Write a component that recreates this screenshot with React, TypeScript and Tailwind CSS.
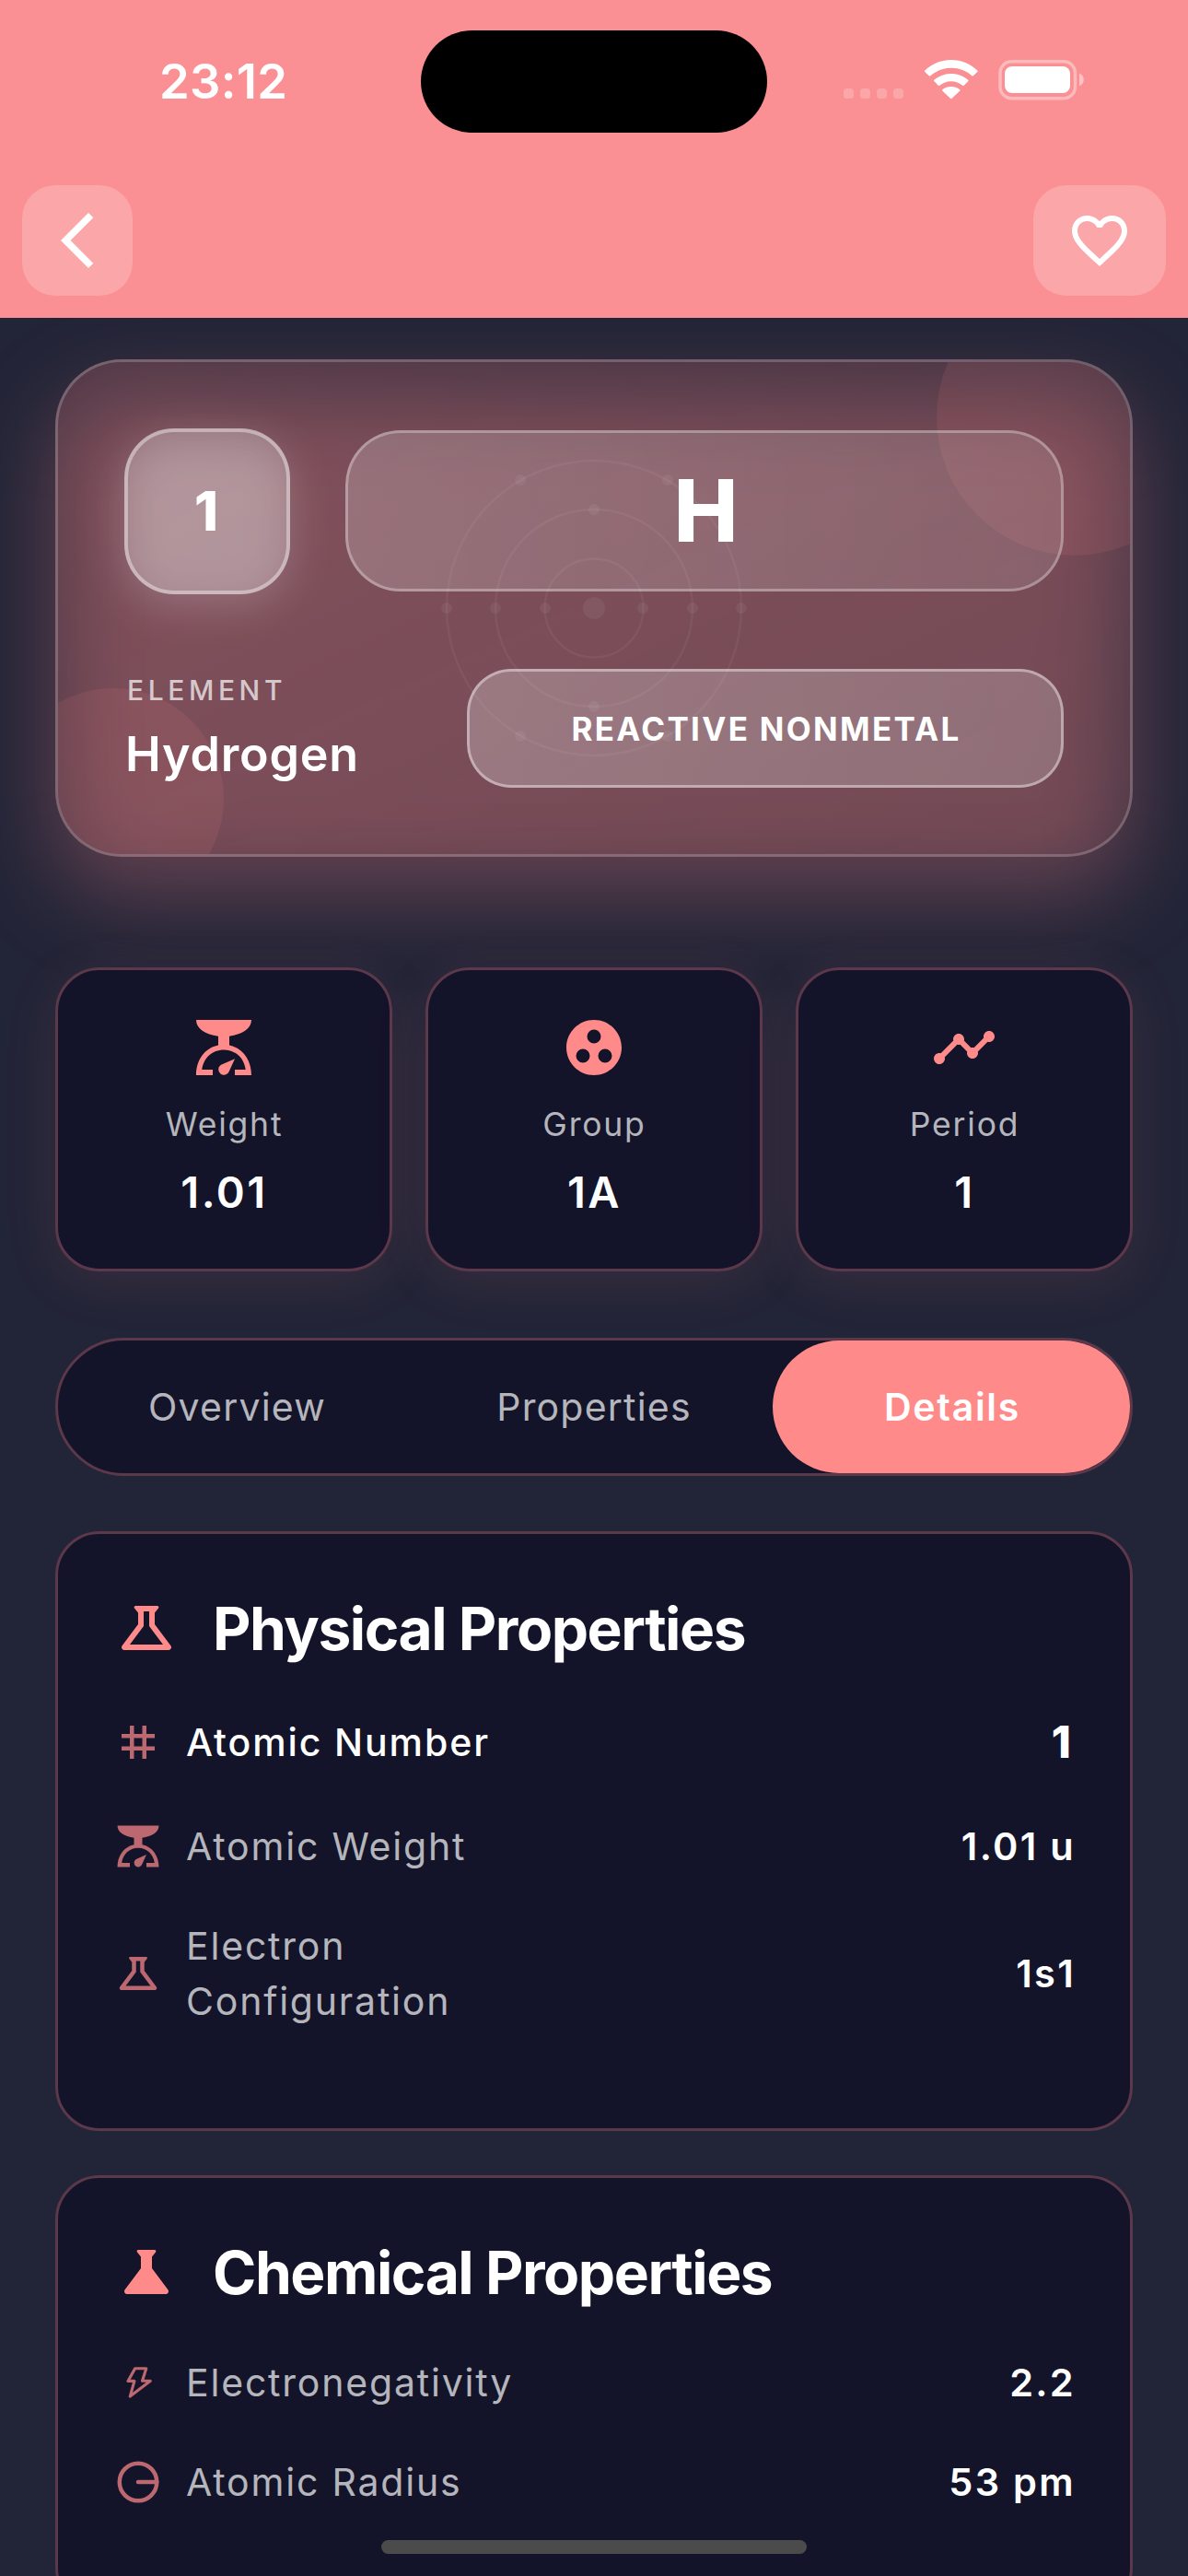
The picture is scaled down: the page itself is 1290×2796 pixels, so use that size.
import type { ReactNode } from "react";
import {
  MdArrowBackIosNew,
  MdFavoriteBorder,
  MdGroupWork,
  MdOutlineScience,
  MdScience,
  MdTag,
  MdTimeline,
} from "react-icons/md";

function ScaleIcon({ className }: { className?: string }) {
  return (
    <svg viewBox="0 0 24 24" fill="currentColor" className={className}>
      <path d="M2 2h20c0 3.2-3.3 5.2-8 5.9v3.3c4.8.9 8 5.3 8 10.8h-6v-2h3.900c-.5-4.200-3.700-7.200-7.900-7.200S4.600 15.800 4.100 20H8v2H2c0-5.500 3.200-9.900 8-10.800V7.900C5.300 7.200 2 5.200 2 2z" />
      <path d="M16 16.050 13.950 20.600A2 2 0 1 1 11 18.250z" />
    </svg>
  );
}

function BoltIcon({ className }: { className?: string }) {
  return (
    <svg viewBox="0 0 24 24" fill="none" stroke="currentColor" strokeWidth="1.400" strokeLinejoin="round" className={className}>
      <path d="M10.500 5.200h5.400l-1.900 6h3.900L8.100 18.700l2.100-7.400H7.100z" />
    </svg>
  );
}

function RadiusIcon({ className }: { className?: string }) {
  return (
    <svg viewBox="0 0 24 24" fill="none" stroke="currentColor" strokeWidth="2" strokeLinecap="round" className={className}>
      <circle cx="12" cy="12" r="9" />
      <path d="M12 12h9" />
    </svg>
  );
}

function StatusIcons() {
  return (
    <svg viewBox="0 0 264 48" className="h-[48px] w-[264px]" fill="#fff">
      {[0, 18, 36, 54].map((x) => (
        <rect key={x} x={1 + x} y="34" width="11" height="11" rx="3.500" opacity=".2" />
      ))}
      <g transform="translate(85.900 3) scale(1.1 1.020)">
        <path d="M29 8.700c7.900 0 15.100 3.100 20.400 8.200.4.400 1.100.4 1.500 0l4-4.100c.4-.4.4-1.100 0-1.600C48.200 4.300 39.100 0 29 0S9.800 4.300 3.100 11.200c-.4.500-.4 1.200 0 1.600l4 4.100c.4.400 1.100.4 1.500 0C13.900 11.800 21.100 8.700 29 8.700z" />
        <path d="M29 22.700c4.300 0 8.300 1.700 11.200 4.400.5.400 1.100.4 1.500 0l4-4.200c.5-.4.500-1.200 0-1.600-4.400-4.200-10.300-6.700-16.700-6.700s-12.300 2.500-16.700 6.700c-.5.400-.5 1.200 0 1.600l4 4.200c.4.400 1 .4 1.500 0 2.900-2.700 6.900-4.400 11.200-4.400z" />
        <path d="M37.500 31.500c.5.400.5 1.100 0 1.600l-7.700 7.900c-.4.500-1.200.5-1.600 0l-7.700-7.900c-.5-.5-.5-1.200 0-1.600 2.300-2 5.300-3.100 8.500-3.100s6.200 1.100 8.500 3.100z" />
      </g>
      <rect x="171" y="4.750" width="81.500" height="40" rx="12.500" fill="none" stroke="#fff" strokeWidth="3.500" opacity=".38" />
      <rect x="176" y="10" width="71" height="29" rx="8" />
      <path d="M257 17.500v14c3-1.200 4.800-4 4.800-7s-1.800-5.800-4.800-7z" opacity=".45" />
    </svg>
  );
}

function OrbitArt() {
  const dots = [
    [-53, 0], [53, 0],
    [-107, 0], [107, 0], [0, -107], [0, 107],
    [-160, 0], [160, 0], [-80, -139], [80, -139], [-80, 139], [80, 139],
  ];
  return (
    <svg viewBox="-180 -180 360 360" className="absolute left-1/2 top-1/2 size-[360px] -translate-x-1/2 -translate-y-1/2">
      <g fill="none" stroke="#fff" strokeOpacity=".05" strokeWidth="2.500">
        <circle r="53.500" />
        <circle r="107" />
        <circle r="160" />
      </g>
      <g fill="#fff" fillOpacity=".06">
        <circle r="12" />
        {dots.map(([x, y]) => (
          <circle key={`${x},${y}`} cx={x} cy={y} r="6" />
        ))}
      </g>
    </svg>
  );
}

function Header() {
  return (
    <header className="relative z-10 h-[345px] shrink-0 bg-[#fa9093]">
      <div className="h-[201px] pt-[33px]">
        <div className="flex h-[111px] items-center">
          <div className="w-[457px] pl-[173px] text-[52.500px] font-semibold leading-none tracking-[0.300px]">23:12</div>
          <div className="h-[111px] w-[376px] rounded-full bg-black" />
          <div className="-mt-[5px] ml-[82px]">
            <StatusIcons />
          </div>
        </div>
      </div>
      <div className="flex justify-between px-[24px]">
        <div className="flex h-[120px] w-[120px] items-center justify-center rounded-[36px] bg-white/20">
          <MdArrowBackIosNew size={72} />
        </div>
        <div className="flex h-[120px] w-[144px] items-center justify-center rounded-[36px] bg-white/20">
          <MdFavoriteBorder size={72} />
        </div>
      </div>
    </header>
  );
}

function Hero() {
  return (
    <section className="relative h-[540px]">
      <div className="absolute inset-0 translate-y-[40px] rounded-[72px] bg-[#ff8a8a]/30 blur-[48px]" />
      <div className="relative h-full overflow-hidden rounded-[72px] border-[3px] border-white/20 bg-linear-to-br from-[#ff8a8a]/20 to-[#ff8a8a]/10 bg-origin-border p-[72px]">
        <div className="absolute -right-[90px] -top-[90px] size-[300px] rounded-full bg-[#ff8a8a]/10" />
        <div className="absolute -bottom-[60px] -left-[60px] size-[240px] rounded-full bg-[#ff8a8a]/10" />
        <OrbitArt />
        <div className="relative flex h-full flex-col justify-between">
          <div className="flex items-center gap-[60px]">
            <div className="relative size-[180px] shrink-0">
              <div className="absolute inset-0 translate-y-[12px] rounded-[54px] bg-white/20 blur-[24px]" />
              <div className="relative flex size-full items-center justify-center rounded-[54px] border-[4.500px] border-white/40 bg-white/25 pr-[2px] text-[59px] font-extrabold leading-none">
                1
              </div>
            </div>
            <div className="flex h-[175px] flex-1 items-center justify-center rounded-[60px] border-[3px] border-white/30 bg-linear-to-r from-white/20 to-white/12 bg-origin-border pl-[3px] text-[93px] font-extrabold leading-none">
              H
            </div>
          </div>
          <div className="flex items-end justify-between">
            <div className="pb-[5px]">
              <div className="pl-[3px] text-[30px] font-medium leading-[36px] tracking-[4.600px] text-white/70">ELEMENT</div>
              <div className="mt-[21px] pl-[1px] text-[52px] font-semibold leading-[62px] tracking-[0.800px]">Hydrogen</div>
            </div>
            <div className="flex h-[129px] w-[648px] items-center justify-center rounded-[48px] border-[3px] border-white/40 bg-linear-to-r from-white/25 to-white/20 bg-origin-border pl-[2px] pt-[2px] text-[35px] font-bold leading-none tracking-[2.300px]">
              REACTIVE NONMETAL
            </div>
          </div>
        </div>
      </div>
    </section>
  );
}

function Stat({ icon, label, value }: { icon: ReactNode; label: string; value: string }) {
  return (
    <div className="flex h-[330px] flex-col items-center rounded-[48px] border-[3px] border-[#5b384a] bg-[#131329] pt-[48px] shadow-[0_12px_60px_rgba(255,138,138,0.1)]">
      <div className="text-[#ff8a8a]">{icon}</div>
      <div className="mt-[24px] pl-[1px] text-[35.500px] leading-[48px] tracking-[1.800px] text-white/70">{label}</div>
      <div className="mt-[19px] pl-[1px] text-[47px] font-semibold leading-[60px] tracking-[2.500px]">{value}</div>
    </div>
  );
}

function Panel({ icon, title, children }: { icon: ReactNode; title: string; children: ReactNode }) {
  return (
    <section className="shrink-0 rounded-[48px] border-[3px] border-[#5b384a] bg-[#131329] p-[60px] pb-[108px]">
      <div className="mb-[48px] flex h-[84px] items-center gap-[36px]">
        <span className="text-[#ff8a8a]">{icon}</span>
        <h2 className="pt-[2px] text-[64px] font-bold leading-none tracking-[-1.450px]">{title}</h2>
      </div>
      <div className="flex flex-col gap-[48px]">{children}</div>
    </section>
  );
}

function Row({ icon, label, value, strong = false }: { icon: ReactNode; label: string; value: string; strong?: boolean }) {
  return (
    <div className={strong ? "flex min-h-[69px] items-center" : "flex min-h-[60px] items-center"}>
      <span className="text-[#bb6870]">{icon}</span>
      <span
        className={
          strong
            ? "ml-[25px] w-[370px] text-[41px] font-medium leading-[60px] tracking-[1.900px]"
            : "ml-[25px] w-[370px] text-[41px] leading-[60px] tracking-[1.800px] text-white/70"
        }
      >
        {label}
      </span>
      <span
        className={
          strong
            ? "ml-auto text-[48px] font-extrabold leading-none tracking-[4px]"
            : "-mr-[1px] ml-auto pt-[2px] text-[41.500px] font-semibold leading-none tracking-[2.300px]"
        }
      >
        {value}
      </span>
    </div>
  );
}

export default function App() {
  return (
    <div className="relative flex h-[2796px] w-[1290px] flex-col overflow-hidden bg-[#222437] font-['Inter',sans-serif] text-white">
      <Header />
      <main className="flex flex-col px-[60px] pt-[44.500px]">
        <Hero />
        <div className="relative mt-[120px] grid grid-cols-3 gap-[36px]">
          <Stat icon={<ScaleIcon className="size-[72px]" />} label="Weight" value="1.01" />
          <Stat icon={<MdGroupWork size={72} />} label="Group" value="1A" />
          <Stat icon={<MdTimeline size={72} />} label="Period" value="1" />
        </div>
        <nav className="relative mt-[72px] grid h-[150px] grid-cols-3 items-stretch rounded-full border-[3px] border-[#5b384a] bg-[#131329] text-center text-[41px] leading-[144px] tracking-[1.200px] text-white/70">
          <span className="pl-[1px]">Overview</span>
          <span>Properties</span>
          <span className="rounded-full bg-[#ff8a8a] pl-[2px] font-semibold tracking-[1.700px] text-white">Details</span>
        </nav>
        <div className="mt-[60px] flex flex-col gap-[48px]">
          <Panel icon={<MdOutlineScience size={72} />} title="Physical Properties">
            <Row icon={<MdTag size={54} />} label="Atomic Number" value="1" strong />
            <Row icon={<ScaleIcon className="size-[54px]" />} label="Atomic Weight" value="1.01 u" />
            <Row icon={<MdOutlineScience size={54} />} label="Electron Configuration" value="1s1" />
          </Panel>
          <Panel icon={<MdScience size={72} />} title="Chemical Properties">
            <Row icon={<BoltIcon className="size-[54px]" />} label="Electronegativity" value="2.2" />
            <Row icon={<RadiusIcon className="size-[54px]" />} label="Atomic Radius" value="53 pm" />
          </Panel>
        </div>
      </main>
      <div className="absolute bottom-[24px] left-[414px] h-[15px] w-[462px] rounded-full bg-[#4b4b4b]" />
    </div>
  );
}
